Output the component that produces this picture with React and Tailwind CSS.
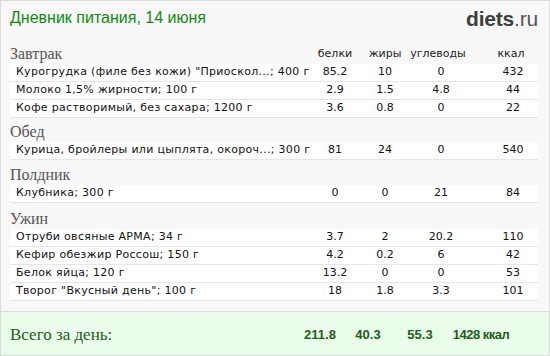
const meals = [
  {
    title: 'Завтрак',
    items: [
      ['Курогрудка (филе без кожи) "Приоскол...; 400 г', '85.2', '10', '0', '432'],
      ['Молоко 1,5% жирности; 100 г', '2.9', '1.5', '4.8', '44'],
      ['Кофе растворимый, без сахара; 1200 г', '3.6', '0.8', '0', '22'],
    ],
  },
  {
    title: 'Обед',
    items: [['Курица, бройлеры или цыплята, окороч...; 300 г', '81', '24', '0', '540']],
  },
  {
    title: 'Полдник',
    items: [['Клубника; 300 г', '0', '0', '21', '84']],
  },
  {
    title: 'Ужин',
    items: [
      ['Отруби овсяные АРМА; 34 г', '3.7', '2', '20.2', '110'],
      ['Кефир обезжир Россош; 150 г', '4.2', '0.2', '6', '42'],
      ['Белок яйца; 120 г', '13.2', '0', '0', '53'],
      ['Творог "Вкусный день"; 100 г', '18', '1.8', '3.3', '101'],
    ],
  },
];

const gaps = ['mt-[10px]', 'mt-[4px]', 'mt-[5px]', 'mt-[6px]'];

const sans = { fontFamily: '"DejaVu Sans", Verdana, sans-serif' };
const serif = { fontFamily: '"Liberation Serif", "DejaVu Serif", serif' };
const arial = { fontFamily: '"Liberation Sans", Arial, sans-serif' };

const Row = ({ item }) => (
  <div className="flex h-[18px] items-center border-b border-[#e6e6e6] bg-white text-[11px] text-[#111]" style={sans}>
    <div className="min-w-0 flex-1 whitespace-nowrap pl-[6px] tracking-[0.3px]">{item[0]}</div>
    <div className="w-[50px] text-center">{item[1]}</div>
    <div className="w-[50px] text-center">{item[2]}</div>
    <div className="w-[56px] pl-[6px] text-center">{item[3]}</div>
    <div className="w-[72px] pl-[22px] text-center">{item[4]}</div>
  </div>
);

export default function App() {
  return (
    <div className="flex h-[356px] w-[550px] flex-col overflow-hidden border border-[#dcdcdc] bg-[#f8f8f8]">
      <div className="flex h-[33px] items-center justify-between px-[9px] pt-[1px]">
        <h1 className="text-[16px] text-[#118a11]" style={arial}>
          Дневник питания, 14 июня
        </h1>
        <div className="pr-[2px] text-[21px] leading-none tracking-[-0.2px]" style={arial}>
          <span className="font-bold text-[#3d3d3d]">diets</span>
          <span className="text-[#555]">.ru</span>
        </div>
      </div>

      <div className="flex flex-1 flex-col px-[9px] pr-[11px]">
        {meals.map((meal, i) => (
          <div key={meal.title} className={gaps[i]}>
            <div className="flex h-[20px] items-center">
              <div className="flex-1 text-[16px] text-[#555]" style={serif}>
                {meal.title}
              </div>
              {i === 0 && (
                <div className="flex text-[11px] text-[#222]" style={sans}>
                  <div className="w-[50px] text-center">белки</div>
                  <div className="w-[50px] text-center">жиры</div>
                  <div className="w-[56px] text-center">углеводы</div>
                  <div className="w-[72px] pl-[18px] text-center">ккал</div>
                </div>
              )}
            </div>
            {meal.items.map((item) => (
              <Row key={item[0]} item={item} />
            ))}
          </div>
        ))}
      </div>

      <div className="flex h-[44px] items-center border-t border-[#dcdcdc] bg-[#eafdea] px-[9px] pt-[2px] text-[#1e5c1e]">
        <div className="w-[285px] text-[17px]" style={serif}>
          Всего за день:
        </div>
        <div className="flex text-[13px] font-bold" style={arial}>
          <div className="w-[50px] text-center">211.8</div>
          <div className="w-[46px] text-center">40.3</div>
          <div className="w-[58px] text-center">55.3</div>
          <div className="w-[64px] text-center tracking-[-0.5px]">1428 ккал</div>
        </div>
      </div>
    </div>
  );
}
